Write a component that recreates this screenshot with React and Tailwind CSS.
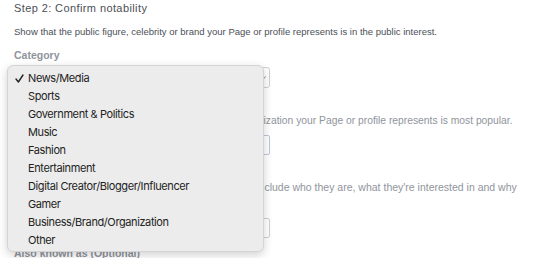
import React from "react";

const items = [
  "News/Media",
  "Sports",
  "Government & Politics",
  "Music",
  "Fashion",
  "Entertainment",
  "Digital Creator/Blogger/Influencer",
  "Gamer",
  "Business/Brand/Organization",
  "Other",
];

export default function App() {
  return (
    <div className="relative w-[540px] h-[258px] overflow-hidden bg-white" style={{ fontFamily: '"Liberation Sans", Arial, sans-serif' }}>
      <div className="flex flex-col pl-[14px] pt-[2px]">
        <div className="text-[11px] leading-[13px] tracking-[0.4px] text-[#4b4f56]">Step 2: Confirm notability</div>
        <div className="mt-[11px] text-[9.5px] leading-[12px] text-[#4b4f56] whitespace-nowrap">
          Show that the public figure, celebrity or brand your Page or profile represents is in the public interest.
        </div>
        <div className="mt-[11px] text-[10.5px] leading-[13px] font-bold text-[#90949c]">Category</div>
        <div className="mt-[5px] w-[256px] h-[21px] border border-[#ccd0d5] rounded-[3px] flex items-center justify-end pr-[3px]">
          <svg width="6" height="6" viewBox="0 0 6 6"><path d="M0.5 1.5 L3 4.5 L5.5 1.5" fill="none" stroke="#777" strokeWidth="0.9" /></svg>
        </div>
        <div className="mt-[8px] text-[10.5px] leading-[13px] font-bold text-[#90949c]">Country/Region</div>
        <div className="mt-[5px] text-[10.3px] leading-[13px] text-[#90949c] whitespace-nowrap">
          Select the country or region where the person or organization your Page or profile represents is most popular.
        </div>
        <div className="mt-[8px] w-[256px] h-[20px] border border-[#bdc7d8] rounded-[2px]"></div>
        <div className="mt-[8px] text-[10.5px] leading-[13px] font-bold text-[#90949c]">Audience</div>
        <div className="mt-[5px] w-[508px] text-[10.5px] leading-[13px] text-[#90949c]">
          Describe the people who follow this Page or profile. Include who they are, what they're interested in and why they follow it.
        </div>
        <div className="mt-[11px] w-[256px] h-[20px] border border-[#ccd0d5] rounded-[2px]"></div>
        <div className="mt-[9px] text-[10.5px] leading-[13px] font-bold text-[#90949c]">Also known as (Optional)</div>
      </div>

      <div
        className="absolute left-[7px] top-[65px] w-[257px] h-[187px] rounded-[6px] bg-[#ececec] border border-[#d4d4d4] pt-[3px] shadow-[0_3px_10px_rgba(0,0,0,0.18)]"
        style={{ fontFamily: 'Inter, "Liberation Sans", sans-serif' }}
      >
        {items.map((it, i) => (
          <div key={it} className="relative h-[18px] flex items-center pl-[20px] text-[11px] tracking-[-0.4px] text-[#232323]">
            {i === 0 && (
              <svg className="absolute left-[7px] top-[5px]" width="9" height="9" viewBox="0 0 9 9">
                <path d="M1 5 L3.4 8 L8 1" fill="none" stroke="#232323" strokeWidth="1.4" strokeLinecap="round" strokeLinejoin="round" />
              </svg>
            )}
            {it}
          </div>
        ))}
      </div>
    </div>
  );
}
